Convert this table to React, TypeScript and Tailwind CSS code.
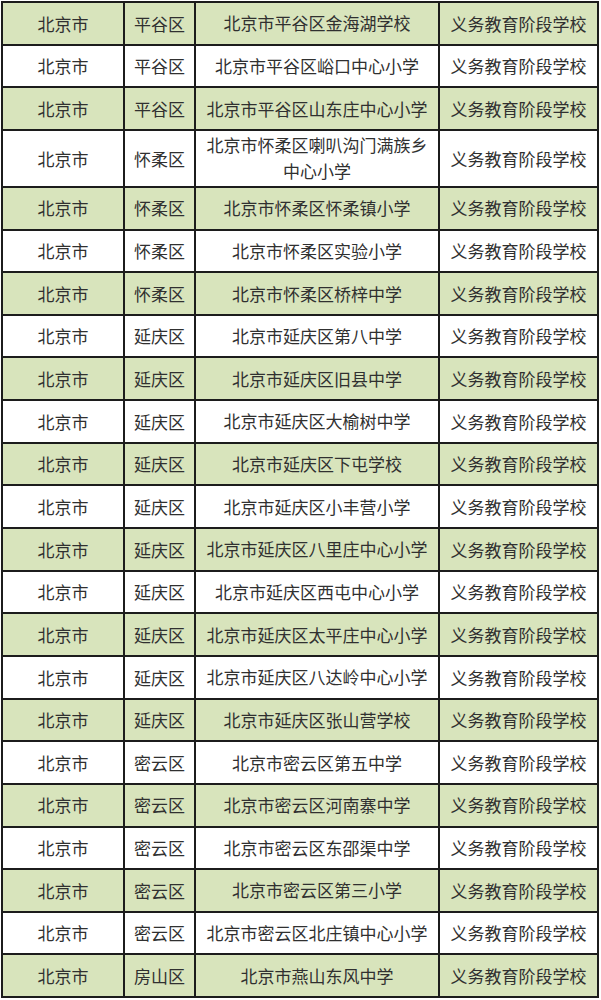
const rows: [string, string][] = [
  ["平谷区", "北京市平谷区金海湖学校"],
  ["平谷区", "北京市平谷区峪口中心小学"],
  ["平谷区", "北京市平谷区山东庄中心小学"],
  ["怀柔区", "北京市怀柔区喇叭沟门满族乡\n中心小学"],
  ["怀柔区", "北京市怀柔区怀柔镇小学"],
  ["怀柔区", "北京市怀柔区实验小学"],
  ["怀柔区", "北京市怀柔区桥梓中学"],
  ["延庆区", "北京市延庆区第八中学"],
  ["延庆区", "北京市延庆区旧县中学"],
  ["延庆区", "北京市延庆区大榆树中学"],
  ["延庆区", "北京市延庆区下屯学校"],
  ["延庆区", "北京市延庆区小丰营小学"],
  ["延庆区", "北京市延庆区八里庄中心小学"],
  ["延庆区", "北京市延庆区西屯中心小学"],
  ["延庆区", "北京市延庆区太平庄中心小学"],
  ["延庆区", "北京市延庆区八达岭中心小学"],
  ["延庆区", "北京市延庆区张山营学校"],
  ["密云区", "北京市密云区第五中学"],
  ["密云区", "北京市密云区河南寨中学"],
  ["密云区", "北京市密云区东邵渠中学"],
  ["密云区", "北京市密云区第三小学"],
  ["密云区", "北京市密云区北庄镇中心小学"],
  ["房山区", "北京市燕山东风中学"],
];

export default function App() {
  return (
    <div className="bg-white w-[601px] h-[1000px] pt-px pl-px font-['Noto_Sans_CJK_SC','Noto_Sans',sans-serif] text-[17px] text-[#303030]">
      <div className="inline-grid grid-cols-[120px_69px_242px_157px] gap-[2px] p-[2px] bg-[#1c1c1c]">
        {rows.map(([district, school], i) => {
          const bg = i % 2 === 0 ? "bg-[#d8e4bc]" : "bg-white";
          const h = school.includes("\n") ? "h-[55px]" : "h-[40.65px]";
          return [
            <div key={`a${i}`} className={`${bg} ${h} flex items-center justify-center`}>北京市</div>,
            <div key={`b${i}`} className={`${bg} ${h} flex items-center justify-center`}>{district}</div>,
            <div key={`c${i}`} className={`${bg} ${h} flex items-center justify-center text-center leading-[26px] whitespace-pre-line`}>
              {school}
            </div>,
            <div key={`d${i}`} className={`${bg} ${h} flex items-center justify-center`}>义务教育阶段学校</div>,
          ];
        })}
      </div>
    </div>
  );
}
